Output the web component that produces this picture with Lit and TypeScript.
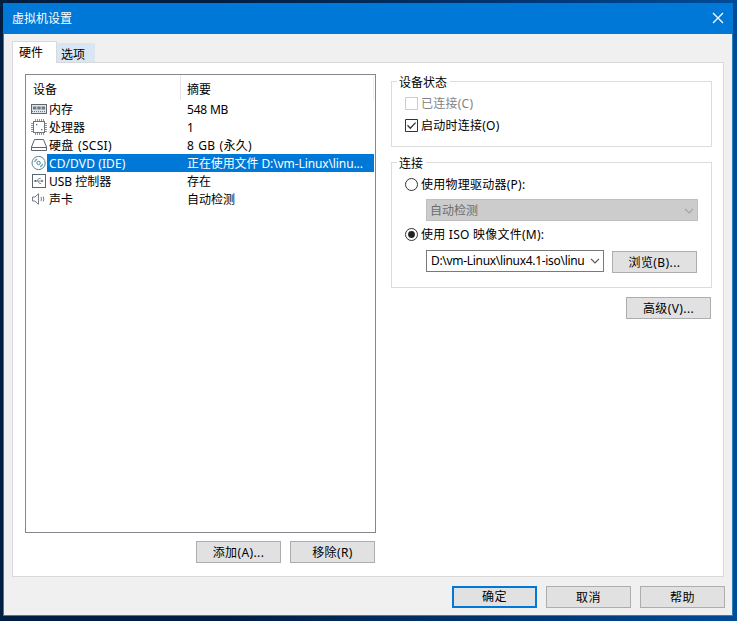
import { LitElement, html, css, svg } from "lit";
import { customElement, property } from "lit/decorators.js";

const font = css`"Noto Sans", "Noto Sans CJK SC", sans-serif`;

const icons: Record<string, unknown> = {
  memory: svg`<rect x=".5" y="3.5" width="15" height="9" fill="#dfe5ea" stroke="#5c6973"/><path d="M2 5.5h3.4v3H2zM6.3 5.5h3.4v3H6.3zM10.6 5.5H14v3h-3.4z" fill="#6d7983"/><path d="M1 10.5h14" stroke="#6d7983" stroke-dasharray="1 1"/>`,
  cpu: svg`<path d="M4.5 0v16M6.5 0v16M8.5 0v16M10.5 0v16M12.5 0v16M0 4.5h16M0 6.5h16M0 8.5h16M0 10.5h16M0 12.5h16" stroke="#8a9299"/><rect x="2.5" y="2.5" width="11" height="11" fill="#fff" stroke="#6a757e"/><path d="M5 5h1.3v1.3H5zM10 10h1.3v1.3H10z" fill="#5a656e"/>`,
  disk: svg`<path d="M3.5 2.5h9l3 7.5v3.5H.5V10zM.5 10.5h15" fill="#fff" stroke="#5a656e"/>`,
  cd: svg`<circle cx="7.6" cy="8" r="6.6" fill="#fff" stroke="#5d7f92"/><circle cx="7.6" cy="8" r="1.7" fill="#fff" stroke="#4a8797"/><path d="M3.6 7a4.3 4.3 0 0 1 2.6-2.9M11.6 9a4.3 4.3 0 0 1-2.6 2.9" fill="none" stroke="#5ba0ae" stroke-width="1.2"/>`,
  usb: svg`<rect x="1.5" y="1.5" width="13" height="13" fill="#fff" stroke="#5b656e"/><path d="M4 8h7M6 8l1.7-2.5h2M7 8l1.5 2.5H10" fill="none" stroke="#6b757e" stroke-width=".8"/><circle cx="4.3" cy="8" r="1.1" fill="#5b656e"/><path d="M10.5 6.5 12.5 8l-2 1.5z" fill="#5b656e"/>`,
  sound: svg`<path d="M1.5 6H4l3.5-3.3v10.6L4 10H1.5z" fill="#fff" stroke="#747d85"/><path d="M10 6q1 2 0 4M12.2 5.5q1.2 2.5 0 5" fill="none" stroke="#747d85"/>`,
};

@customElement("push-button")
class PushButton extends LitElement {
  @property({ type: Boolean, reflect: true }) primary = false;
  static styles = css`
    :host { display: block; width: 85px; height: 22px; }
    button { box-sizing: border-box; width: 100%; height: 100%; padding: 1px 0 0; border: 1px solid #adadad; background: #e1e1e1; color: #000; font: 12px/16px ${font}; letter-spacing: .4px; white-space: nowrap; }
    :host([primary]) button { border: 2px solid #0078d7; padding-top: 0; }
  `;
  render() { return html`<button><slot></slot></button>`; }
}

@customElement("group-box")
class GroupBox extends LitElement {
  @property() label = "";
  static styles = css`
    :host { display: block; box-sizing: border-box; border: 1px solid #dcdcdc; }
    .legend { display: block; width: max-content; margin: -8px 0 -1px 5px; padding: 0 3px 0 2px; background: #fff; line-height: 18px; }
  `;
  render() { return html`<span class="legend">${this.label}</span><slot></slot>`; }
}

@customElement("device-list")
class DeviceList extends LitElement {
  rows = [
    ["memory", "内存", "548 MB"],
    ["cpu", "处理器", "1"],
    ["disk", "硬盘 (SCSI)", "8 GB (永久)"],
    ["cd", "CD/DVD (IDE)", "正在使用文件 D:\\vm-Linux\\linu..."],
    ["usb", "USB 控制器", "存在"],
    ["sound", "声卡", "自动检测"],
  ];
  static styles = css`
    :host { display: block; box-sizing: border-box; width: 351px; height: 459px; border: 1px solid #828790; background: #fff; padding-right: 1px; }
    .head { display: flex; height: 25px; line-height: 29px; }
    .head span { box-sizing: border-box; }
    .h1 { width: 155px; padding-left: 7px; border-right: 1px solid #e5e5e5; }
    .h2 { flex: 1; padding-left: 6px; border-right: 1px solid #eee; }
    .row { display: flex; height: 18px; line-height: 19px; white-space: pre; }
    .icon { width: 16px; height: 16px; margin: 1px 0 0 5px; flex: none; }
    .name { width: 137px; padding-left: 2px; }
    .value { flex: 1; padding-left: 3px; }
    .name, .value { box-sizing: border-box; }
    .selected .name, .selected .value { background: #0078d7; color: #fff; }
    .cd .name { letter-spacing: .1px; }
    .cd .value { letter-spacing: -.1px; }
    .disk .name { letter-spacing: .3px; word-spacing: 1px; }
    .disk .value { letter-spacing: .3px; word-spacing: .7px; }
    .memory .value { letter-spacing: -.2px; }
  `;
  render() {
    return html`<div class="head"><span class="h1">设备</span><span class="h2">摘要</span></div>
      ${this.rows.map(([icon, name, value]) => html`<div class="row ${icon} ${icon === "cd" ? "selected" : ""}"><svg class="icon" viewBox="0 0 16 16">${icons[icon]}</svg><span class="name">${name}</span><span class="value">${value}</span></div>`)}`;
  }
}

@customElement("app-root")
class AppRoot extends LitElement {
  static styles = css`
    :host { display: block; box-sizing: border-box; width: 737px; height: 621px; padding: 3px 4px 5px 3px; overflow: hidden; background: linear-gradient(90deg, #001e42 0 30%, #00397a 75%, #004c98); color: #000; font: 12px/16px ${font}; }
    .window { display: flex; flex-direction: column; height: 613px; background: #f0f0f0; border: 1px solid #2a80b8; border-top: 0; box-sizing: border-box; }
    .title { display: flex; justify-content: space-between; align-items: center; height: 31px; margin: 0 -1px; padding: 0 9px; background: #0078d7; color: #fff; flex: none; }
    .title svg { width: 12px; height: 12px; margin-top: -2px; }
    .tabs { display: flex; align-items: flex-end; height: 28px; padding-left: 8px; flex: none; }
    .tab { box-sizing: border-box; height: 19px; width: 38px; padding-left: 4px; border: 1px solid #dce4ec; border-left: 0; border-bottom: 0; line-height: 21px; background: #d8e6f5; }
    .tab.active { height: 22px; width: 45px; margin-bottom: -1px; padding-left: 6px; border: 1px solid #d9d9d9; border-bottom: 0; background: #fff; line-height: 22px; position: relative; }
    .page { box-sizing: border-box; display: flex; align-items: flex-start; gap: 15px; width: 712px; height: 515px; margin-left: 8px; padding: 11px 11px 0 12px; border: 1px solid #d9d9d9; background: #fff; flex: none; }
    .listactions { display: flex; justify-content: flex-end; gap: 9px; margin: 8px 1px 0 0; }
    .right { width: 321px; padding-top: 7px; }
    .state { height: 66px; }
    .conn { height: 126px; margin-top: 15px; }
    .option { display: flex; align-items: center; height: 22px; gap: 3px; padding-left: 13px; letter-spacing: .25px; }
    .option svg { width: 13px; height: 13px; flex: none; margin-top: -1px; }
    .off { color: #838383; margin-top: 2px; }
    .physical { margin-top: 2px; }
    .combo { box-sizing: border-box; display: flex; align-items: center; justify-content: space-between; height: 22px; padding: 0 3px 0 4px; white-space: nowrap; border: 1px solid #7a7a7a; background: #fff; width: 178px; letter-spacing: -.31px; }
    .combo svg { width: 10px; height: 6px; flex: none; }
    .combo.disabled { width: 272px; margin: 3px 0 3px 34px; padding-left: 3px; padding-top: 2px; border-color: #bfbfbf; background: #ccc; color: #6d6d6d; letter-spacing: 0; }
    .iso { display: flex; gap: 8px; margin: 4px 0 0 34px; }
    .iso push-button { margin-top: 1px; }
    .advanced { margin: 9px 1px 0 auto; }
    .footer { display: flex; gap: 9px; justify-content: flex-end; padding: 9px 7px 0 0; }
  `;
  chevron(color: string) {
    return html`<svg viewBox="0 0 10 6"><path d="M1 .8 5 4.8 9 .8" fill="none" stroke=${color} stroke-width="1.2"/></svg>`;
  }
  render() {
    return html`<div class="window">
      <div class="title"><span>虚拟机设置</span><svg viewBox="0 0 12 12"><path d="m1 1 10 10M11 1 1 11" stroke="#fff" stroke-width="1.3"/></svg></div>
      <div class="tabs"><div class="tab active">硬件</div><div class="tab">选项</div></div>
      <div class="page">
        <div><device-list></device-list>
          <div class="listactions"><push-button>添加(A)...</push-button><push-button>移除(R)</push-button></div>
        </div>
        <div class="right">
          <group-box class="state" label="设备状态">
            <div class="option off"><svg viewBox="0 0 13 13"><path d="M.5.5h12v12H.5z" fill="#fff" stroke="#ccc"/></svg>已连接(C)</div>
            <div class="option"><svg viewBox="0 0 13 13"><path d="M.5.5h12v12H.5z" fill="#fff" stroke="#333"/><path d="m2.5 6.3 2.8 2.9 5.3-5.6" fill="none" stroke="#333" stroke-width="1.3"/></svg>启动时连接(O)</div>
          </group-box>
          <group-box class="conn" label="连接">
            <div class="option physical"><svg viewBox="0 0 13 13"><circle cx="6.5" cy="6.5" r="6" fill="#fff" stroke="#333"/></svg>使用物理驱动器(P):</div>
            <div class="combo disabled"><span>自动检测</span>${this.chevron("#a3a3a3")}</div>
            <div class="option"><svg viewBox="0 0 13 13"><circle cx="6.5" cy="6.5" r="6" fill="#fff" stroke="#333"/><circle cx="6.5" cy="6.5" r="3.4" fill="#222"/></svg>使用 ISO 映像文件(M):</div>
            <div class="iso"><div class="combo"><span>D:\\vm-Linux\\linux4.1-iso\\linu</span>${this.chevron("#555")}</div><push-button>浏览(B)...</push-button></div>
          </group-box>
          <push-button class="advanced">高级(V)...</push-button>
        </div>
      </div>
      <div class="footer"><push-button primary>确定</push-button><push-button>取消</push-button><push-button>帮助</push-button></div>
    </div>`;
  }
}
